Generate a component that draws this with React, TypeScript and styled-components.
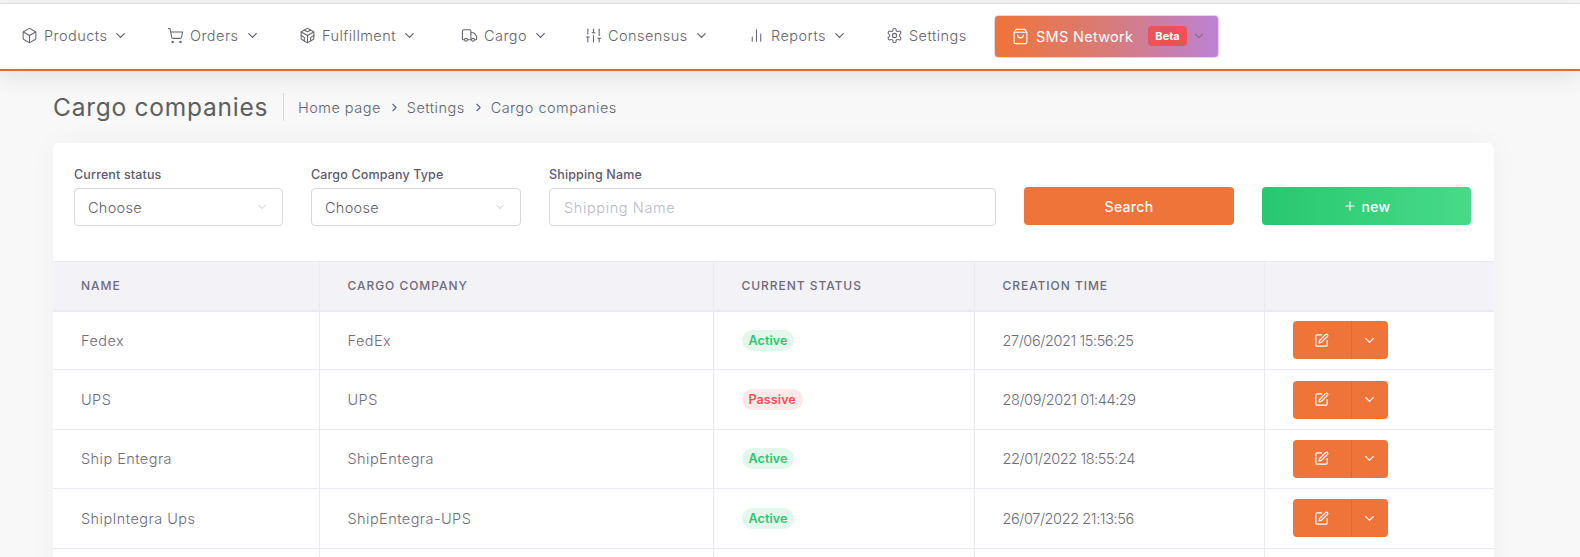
import { createGlobalStyle } from "styled-components";
import styled from "styled-components";
import {
  LuBox,
  LuShoppingCart,
  LuCodesandbox,
  LuTruck,
  LuSlidersVertical,
  LuChartNoAxesColumn,
  LuSettings,
  LuShoppingBag,
  LuChevronDown,
  LuChevronRight,
  LuSquarePen,
  LuPlus,
} from "react-icons/lu";

const GlobalStyle = createGlobalStyle`
  html, body {
    margin: 0;
    padding: 0;
    height: 557px;
    overflow: hidden;
    background: #f8f8f8;
    font-family: "Inter", "Liberation Sans", sans-serif;
    color: #74727f;
  }
  * { box-sizing: border-box; }
`;

const TopStrip = styled.div`
  height: 4px;
  background: #f7f7f7;
  border-bottom: 1px solid #e6e6e6;
`;

const Header = styled.header`
  position: relative;
  height: 67px;
  background: #fff;
  border-bottom: 2px solid #e8672e;
  box-shadow: 0 4px 24px rgba(60, 70, 70, 0.14);
  display: flex;
  align-items: center;
  padding-left: 21px;
`;

const NavItem = styled.div<{ $w: number }>`
  width: ${(p) => p.$w}px;
  flex: none;
  display: flex;
  align-items: center;
  font-size: 14.5px;
  font-weight: 300;
  letter-spacing: 0.45px;
  color: #65636f;
  white-space: nowrap;
  margin-top: -2px;
  svg.main {
    width: 17px;
    height: 17px;
    margin-right: 6px;
    stroke-width: 1.5;
    flex: none;
  }
  svg.caret {
    width: 15px;
    height: 15px;
    margin-left: 6px;
    stroke-width: 2;
  }
`;

const SmsButton = styled.div`
  width: 225px;
  height: 43px;
  margin-top: -1px;
  border-radius: 4px;
  border: 1px solid #e9d3dd;
  background: linear-gradient(90deg, #f0743a 0%, #d87b78 50%, #bc82d4 100%);
  color: #fff;
  display: flex;
  align-items: center;
  padding-left: 17px;
  font-size: 14.5px;
  letter-spacing: 0.3px;
  svg.bag {
    width: 17px;
    height: 17px;
    margin-right: 7px;
    stroke-width: 1.6;
  }
  svg.caret {
    width: 14px;
    height: 14px;
    margin-left: 5px;
    color: #8a6f92;
  }
`;

const BetaTag = styled.span`
  margin-left: 15px;
  background: #ec5258;
  border-radius: 4px;
  font-size: 11px;
  font-weight: 700;
  letter-spacing: 0;
  padding: 3px 7px;
  line-height: 14px;
`;

const Main = styled.main`
  padding: 22px 86px 0 53px;
`;

const PageHead = styled.div`
  display: flex;
  align-items: center;
  height: 28px;
  margin-bottom: 22px;
`;

const PageTitle = styled.h1`
  margin: 0;
  font-size: 24.5px;
  font-weight: 400;
  letter-spacing: 0.75px;
  color: #5e5e5e;
  white-space: nowrap;
  padding-right: 14px;
  border-right: 1px solid #d8d8d8;
  width: 231px;
  line-height: 28px;
`;

const Crumbs = styled.nav`
  display: flex;
  align-items: center;
  padding-left: 14px;
  font-size: 14.5px;
  font-weight: 300;
  letter-spacing: 0.48px;
  color: #5f6377;
  svg {
    width: 13px;
    height: 13px;
    margin: 0 6px 0 7px;
    stroke-width: 2;
  }
`;

const Card = styled.section`
  background: #fff;
  border-radius: 6px;
  box-shadow: 0 0 30px rgba(0, 0, 0, 0.035);
  overflow: hidden;
`;

const FilterRow = styled.div`
  height: 118px;
  padding: 24px 22px 0 21px;
  display: grid;
  grid-template-columns: 209px 210px 447px 210px 209px;
  column-gap: 28px;
`;

const Field = styled.label`
  display: flex;
  flex-direction: column;
`;

const FieldLabel = styled.span`
  font-size: 12.5px;
  line-height: 15px;
  font-weight: 500;
  letter-spacing: 0.15px;
  color: #5c5a70;
  margin-bottom: 6px;
`;

const SelectBox = styled.div`
  height: 38px;
  border: 1px solid #d8d6de;
  border-radius: 4px;
  padding: 0 14px 0 13px;
  display: flex;
  align-items: center;
  justify-content: space-between;
  font-size: 14.5px;
  font-weight: 300;
  letter-spacing: 0.3px;
  color: #5f5d6b;
  svg {
    width: 12px;
    height: 12px;
    color: #c4c4cc;
  }
`;

const TextInput = styled.input`
  height: 38px;
  width: 100%;
  border: 1px solid #d8d6de;
  border-radius: 4px;
  padding: 0 14px;
  outline: none;
  font: 300 14.5px "Inter", "Liberation Sans", sans-serif;
  letter-spacing: 0.62px;
  &::placeholder {
    color: #b9b9c3;
    opacity: 1;
  }
`;

const ActionButton = styled.button<{ $green?: boolean }>`
  height: 38px;
  margin-top: 20px;
  border: 0;
  border-radius: 4px;
  color: #fff;
  font: 500 14px "Inter", "Liberation Sans", sans-serif;
  letter-spacing: 0.3px;
  display: flex;
  align-items: center;
  justify-content: center;
  background: ${(p) =>
    p.$green
      ? "linear-gradient(90deg, #28c76f 0%, #48da89 100%)"
      : "#ef743a"};
  svg {
    width: 14px;
    height: 14px;
    margin-right: 5px;
  }
`;

const Table = styled.table`
  width: 100%;
  table-layout: fixed;
  border-collapse: collapse;
  th,
  td {
    text-align: left;
    padding: 0 0 0 28px;
    border: 1px solid #ebe9f1;
    white-space: nowrap;
  }
  th:first-child,
  td:first-child {
    border-left: 0;
  }
  th:last-child,
  td:last-child {
    border-right: 0;
  }
`;

const HeadRow = styled.tr`
  height: 49px;
  background: #f3f2f7;
  th {
    font-size: 12px;
    font-weight: 500;
    letter-spacing: 0.95px;
    color: #6e6b7b;
    border-bottom-width: 2px;
  }
`;

const BodyRow = styled.tr`
  height: 59.4px;
  td {
    font-size: 14.5px;
    font-weight: 300;
    letter-spacing: 0.45px;
    color: #6e6b7b;
  }
`;

const TimeText = styled.span`
  letter-spacing: -0.4px;
`;

const StatusPill = styled.span<{ $active: boolean }>`
  display: inline-block;
  font-size: 12.5px;
  font-weight: 600;
  line-height: 21px;
  letter-spacing: 0.1px;
  padding: 0 7px;
  border-radius: 11px;
  color: ${(p) => (p.$active ? "#28c76f" : "#ea5455")};
  background: ${(p) => (p.$active ? "#e4f7ed" : "#fceaea")};
`;

const SplitButton = styled.div`
  display: flex;
  width: 95px;
  height: 38px;
  border-radius: 4px;
  overflow: hidden;
  background: #ef743a;
  color: #fff;
`;

const SplitPart = styled.div<{ $w: number }>`
  width: ${(p) => p.$w}px;
  display: flex;
  align-items: center;
  justify-content: center;
  & + & {
    border-left: 1px solid #dd6a35;
  }
  svg {
    width: 15px;
    height: 15px;
  }
`;

const nav = [
  { label: "Products", icon: LuBox, w: 146, caret: true },
  { label: "Orders", icon: LuShoppingCart, w: 132, caret: true },
  { label: "Fulfillment", icon: LuCodesandbox, w: 162, caret: true },
  { label: "Cargo", icon: LuTruck, w: 124, caret: true },
  { label: "Consensus", icon: LuSlidersVertical, w: 163, caret: true },
  { label: "Reports", icon: LuChartNoAxesColumn, w: 138, caret: true },
  { label: "Settings", icon: LuSettings, w: 108, caret: false },
];

const rows = [
  { name: "Fedex", company: "FedEx", active: true, time: "27/06/2021 15:56:25" },
  { name: "UPS", company: "UPS", active: false, time: "28/09/2021 01:44:29" },
  { name: "Ship Entegra", company: "ShipEntegra", active: true, time: "22/01/2022 18:55:24" },
  { name: "ShipIntegra Ups", company: "ShipEntegra-UPS", active: true, time: "26/07/2022 21:13:56" },
];

const App = () => {
  return (
    <>
      <GlobalStyle />
      <TopStrip />
      <Header>
        {nav.map((item) => (
          <NavItem key={item.label} $w={item.w}>
            <item.icon className="main" />
            {item.label}
            {item.caret && <LuChevronDown className="caret" />}
          </NavItem>
        ))}
        <SmsButton>
          <LuShoppingBag className="bag" />
          SMS Network
          <BetaTag>Beta</BetaTag>
          <LuChevronDown className="caret" />
        </SmsButton>
      </Header>
      <Main>
        <PageHead>
          <PageTitle>Cargo companies</PageTitle>
          <Crumbs>
            Home page
            <LuChevronRight />
            Settings
            <LuChevronRight />
            Cargo companies
          </Crumbs>
        </PageHead>
        <Card>
          <FilterRow>
            <Field>
              <FieldLabel>Current status</FieldLabel>
              <SelectBox>
                Choose
                <LuChevronDown />
              </SelectBox>
            </Field>
            <Field>
              <FieldLabel>Cargo Company Type</FieldLabel>
              <SelectBox>
                Choose
                <LuChevronDown />
              </SelectBox>
            </Field>
            <Field>
              <FieldLabel>Shipping Name</FieldLabel>
              <TextInput placeholder="Shipping Name" />
            </Field>
            <ActionButton>Search</ActionButton>
            <ActionButton $green>
              <LuPlus />
              new
            </ActionButton>
          </FilterRow>
          <Table>
            <colgroup>
              <col style={{ width: 266 }} />
              <col style={{ width: 394 }} />
              <col style={{ width: 261 }} />
              <col style={{ width: 290 }} />
              <col />
            </colgroup>
            <thead>
              <HeadRow>
                <th>NAME</th>
                <th>CARGO COMPANY</th>
                <th>CURRENT STATUS</th>
                <th>CREATION TIME</th>
                <th />
              </HeadRow>
            </thead>
            <tbody>
              {rows.map((row) => (
                <BodyRow key={row.name}>
                  <td>{row.name}</td>
                  <td>{row.company}</td>
                  <td>
                    <StatusPill $active={row.active}>
                      {row.active ? "Active" : "Passive"}
                    </StatusPill>
                  </td>
                  <td>
                    <TimeText>{row.time}</TimeText>
                  </td>
                  <td>
                    <SplitButton>
                      <SplitPart $w={58}>
                        <LuSquarePen />
                      </SplitPart>
                      <SplitPart $w={37}>
                        <LuChevronDown />
                      </SplitPart>
                    </SplitButton>
                  </td>
                </BodyRow>
              ))}
              <BodyRow>
                <td />
                <td />
                <td />
                <td />
                <td />
              </BodyRow>
            </tbody>
          </Table>
        </Card>
      </Main>
    </>
  );
};

export default App;
